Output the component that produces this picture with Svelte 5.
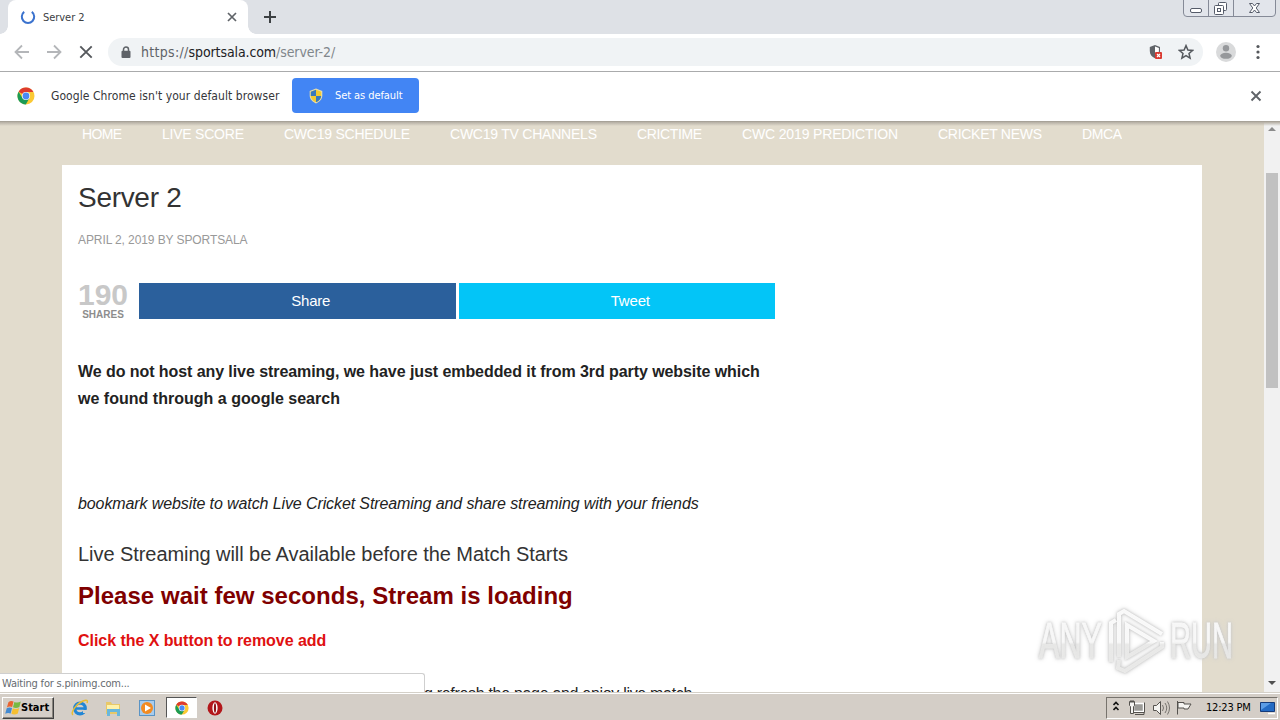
<script>
	const menu = [
		{ label: 'HOME', width: 40 },
		{ label: 'LIVE SCORE', width: 82 },
		{ label: 'CWC19 SCHEDULE', width: 126 },
		{ label: 'CWC19 TV CHANNELS', width: 147 },
		{ label: 'CRICTIME', width: 65 },
		{ label: 'CWC 2019 PREDICTION', width: 156 },
		{ label: 'CRICKET NEWS', width: 104 },
		{ label: 'DMCA', width: 40 }
	];
</script>

{#snippet chromeLogo(size)}
	<svg width={size} height={size} viewBox="0 0 18 18">
		<circle cx="9" cy="9" r="8.5" fill="#fbc934" />
		<path d="M9 9 1.6 4.7A8.5 8.5 0 0 1 16.4 5H9z" fill="#dd3b2e" />
		<path d="M1.6 4.7A8.5 8.5 0 0 0 8.8 17.5L12.5 11 9 9 5.5 11z" fill="#1b9b55" />
		<circle cx="9" cy="9" r="4.1" fill="#fff" />
		<circle cx="9" cy="9" r="3.4" fill="#4a8af4" />
	</svg>
{/snippet}

<div class="screen">
	<div class="tabs">
		<div class="tab">
			<svg class="spinner" width="16" height="16" viewBox="0 0 16 16">
				<path d="M4.2 2.9A6.2 6.2 0 1 0 11.8 2.9" fill="none" stroke="#3b72ce" stroke-width="2" />
			</svg>
			<span class="tab-title">Server 2</span>
			<svg width="10" height="10" viewBox="0 0 10 10">
				<path d="M1 1l8 8M9 1L1 9" stroke="#5f6368" stroke-width="1.7" />
			</svg>
		</div>
		<svg class="plus" width="12" height="12" viewBox="0 0 12 12">
			<path d="M6 0v12M0 6h12" stroke="#3c4043" stroke-width="2" />
		</svg>
		<svg class="controls" width="94" height="18" viewBox="0 0 94 18">
			<path d="M.5 0v13q0 3.5 3.5 3.5h85q3.5 0 3.5-3.5V0M25.5 0v16M50.5 0v16" fill="#e2e5eb" stroke="#858a97" />
			<rect x="7.5" y="8.5" width="11" height="4" rx="1.5" fill="#fff" stroke="#555b69" />
			<rect x="35.5" y="2.5" width="8" height="8" rx="1" fill="#fff" stroke="#555b69" />
			<rect x="31.5" y="5.5" width="9" height="9" rx="1" fill="#fff" stroke="#555b69" />
			<rect x="34.5" y="8.5" width="3" height="3" fill="none" stroke="#555b69" />
			<path d="M66.5 3.5h3l2 2.500 2-2.500h3l-3.300 4.500 3.300 4.500h-3l-2-2.500-2 2.500h-3l3.300-4.500z" fill="#fff" stroke="#555b69" />
		</svg>
	</div>

	<div class="toolbar">
		<svg width="16" height="16" viewBox="0 0 16 16">
			<path d="M15 8H2M8 1.500 1.500 8 8 14.500" fill="none" stroke="#b4b6b9" stroke-width="1.8" />
		</svg>
		<svg width="16" height="16" viewBox="0 0 16 16">
			<path d="M1 8h13M8 1.500 14.500 8 8 14.500" fill="none" stroke="#b4b6b9" stroke-width="1.8" />
		</svg>
		<svg width="16" height="16" viewBox="0 0 16 16">
			<path d="M2.300 2.300l11.400 11.400M13.700 2.300L2.300 13.700" stroke="#55585c" stroke-width="1.9" />
		</svg>
		<div class="address">
			<svg class="lock" width="10" height="13" viewBox="0 0 10 13">
				<path d="M2.500 6V3.500a2.500 2.500 0 0 1 5 0V6" fill="none" stroke="#5f6368" stroke-width="1.5" />
				<rect x="0.5" y="4.8" width="9" height="7.2" rx="1" fill="#5f6368" />
			</svg>
			<span class="url"><i>https://</i>sportsala.com<em>/server-2/</em></span>
			<svg class="shield" width="16" height="18" viewBox="0 0 16 18">
				<path d="M7 2 1.800 4v4c0 3.500 2 6 5.200 7.300 3.200-1.300 5-3.800 5-7.300V4z" fill="#5f6368" />
				<path d="M7 3.500v10.300c2.400-1.200 3.900-3.100 3.900-5.800V5z" fill="#fff" />
				<rect x="7" y="9" width="7" height="7" rx="1" fill="#d93a31" />
				<path d="M9 11l3 3M12 11l-3 3" stroke="#fff" stroke-width="1.2" />
			</svg>
			<svg width="16" height="16" viewBox="0 0 16 16">
				<path d="M8 1.600 9.900 6l4.700.4-3.600 3.100 1.100 4.700L8 11.700l-4.100 2.500L5 9.500 1.400 6.400 6.100 6z" fill="none" stroke="#55595e" stroke-width="1.5" />
			</svg>
		</div>
		<svg class="avatar" width="20" height="20" viewBox="0 0 20 20">
			<circle cx="10" cy="10" r="10" fill="#d9dadb" />
			<circle cx="10" cy="6.3" r="3.2" fill="#96989b" />
			<ellipse cx="10" cy="13.8" rx="5.8" ry="3" fill="#96989b" />
		</svg>
		<svg class="dots" width="4" height="16" viewBox="0 0 4 16" fill="#55585c">
			<circle cx="2" cy="2.5" r="1.6" />
			<circle cx="2" cy="8" r="1.6" />
			<circle cx="2" cy="13.5" r="1.6" />
		</svg>
	</div>

	<div class="infobar">
		{@render chromeLogo(18)}
		<span class="notice">Google Chrome isn't your default browser</span>
		<button>
			<svg width="14" height="16" viewBox="0 0 14 16">
				<path d="M7 .5 13.300 3v4.500C13.300 11 10.500 14 7 15.500 3.500 14 .7 11 .7 7.500V3z" fill="#e8dfad" />
				<path d="M7 1.800V8H1.800V3.700zM7 8h5.200C12 11 10 13 7 14.300z" fill="#f3ca31" />
				<path d="M7 1.800V8H1.800V3.700zM7 8h5.200C12 11 10 13 7 14.300z" fill="#3979bd" />
				<path d="M7 1.800V8h5.200V3.700zM7 8H1.800C2 11 4 13 7 14.300z" fill="#f3ca31" />
			</svg>
			<span>Set as default</span>
		</button>
		<svg class="dismiss" width="12" height="12" viewBox="0 0 12 12">
			<path d="M1.500 1.500l9 9M10.500 1.500l-9 9" stroke="#5f6368" stroke-width="1.9" />
		</svg>
	</div>

	<div class="viewport">
		<div class="page">
			<nav>
				{#each menu as item}
					<svg width={item.width} height="18">
						<text x="0" y="14" textLength={item.width}>{item.label}</text>
					</svg>
				{/each}
			</nav>
			<main>
				<h1>Server 2</h1>
				<p class="meta">APRIL 2, 2019 BY SPORTSALA</p>
				<div class="share">
					<div class="count"><b>190</b><span>SHARES</span></div>
					<a class="facebook">Share</a>
					<a class="twitter">Tweet</a>
				</div>
				<p class="disclaimer"><span>We do not host any live streaming, we have just embedded it from 3rd party website which</span><br />we found through a google search</p>
				<p class="bookmark">bookmark website to watch Live Cricket Streaming and share streaming with your friends</p>
				<h3>Live Streaming will be Available before the Match Starts</h3>
				<h2>Please wait few seconds, Stream is loading</h2>
				<p class="remove">Click the X button to remove add</p>
				<p class="refresh">g refresh the page and enjoy live match</p>
			</main>
		</div>
		<div class="scrollbar">
			<svg width="8" height="4" viewBox="0 0 8 4"><path d="M0 4 4 0l4 4z" fill="#8b8b8b" /></svg>
			<div class="thumb"></div>
			<svg class="down" width="8" height="4" viewBox="0 0 8 4"><path d="M0 0l4 4 4-4z" fill="#505050" /></svg>
		</div>
		<div class="status">Waiting for s.pinimg.com...</div>
		<svg class="watermark" width="206" height="70" viewBox="0 0 206 70">
			<defs>
				<linearGradient id="fade" x1="0" y1="0" x2="0" y2="1">
					<stop offset=".52" stop-color="#fff" />
					<stop offset=".56" stop-color="#ededec" />
				</linearGradient>
			</defs>
			<g fill="url(#fade)" stroke="url(#fade)" stroke-width=".8" opacity=".85">
				<text x="5" y="50" textLength="63" lengthAdjust="spacingAndGlyphs">ANY</text>
				<text x="136" y="50" textLength="63" lengthAdjust="spacingAndGlyphs">RUN</text>
			</g>
			<g fill="none" stroke="url(#fade)" stroke-width="4" opacity=".9">
				<path d="M77 54V15l5-3M85 49V6l5-3 38 23M93 17v32l27-16zM85 52l-1 8 7 3 37-24v-5" />
			</g>
		</svg>
	</div>

	<footer>
		<div class="start">
			<svg width="16" height="16" viewBox="0 0 15 15">
				<path d="M3.200 2Q5.500.300 8 1.500L6.700 6.600Q4.200 5.400 1.800 7z" fill="#e96431" />
				<path d="M8.800 1.900q3 1.300 6-.5L13.500 6.600q-3 1.700-6 .3z" fill="#78b943" />
				<path d="M1.600 7.800q2.500-1.600 5-.3l-1.300 5.200Q2.800 11.500.2 13z" fill="#438ad2" />
				<path d="M7.300 7.800q3 1.400 6-.3L12 12.700q-3 1.700-6 .3z" fill="#f5bf32" />
			</svg>
			<b>Start</b>
		</div>
		<div class="launch">
			<svg width="18" height="18" viewBox="0 0 18 18">
				<circle cx="9" cy="9.5" r="5.3" fill="none" stroke="#2186d5" stroke-width="3.2" />
				<path d="M5 9.500h10" stroke="#2186d5" stroke-width="2.5" />
				<path d="M12 11h6v3h-6z" fill="#d5cfc7" />
				<path d="M2 16C-1 14 5 5 12 2c4-1.700 5-.5 4 2" fill="none" stroke="#e8bd33" stroke-width="1.5" />
			</svg>
			<svg class="folder" width="18" height="18" viewBox="0 0 18 18">
				<path d="M2 3h5l1 2h8v10H2z" fill="#e8c868" />
				<path d="M3 6h12v5H3z" fill="#fff2aa" />
				<path d="M3 10h13v7h-3v-4H6v4H3z" fill="#69b7dc" />
			</svg>
			<svg width="18" height="18" viewBox="0 0 18 18">
				<rect x="1.5" y="1.5" width="15" height="15" fill="#a8cced" stroke="#5a94c5" />
				<circle cx="9" cy="9" r="6" fill="#f28b22" />
				<path d="M7 5.500v7L13 9z" fill="#fff" />
			</svg>
			<div class="active">{@render chromeLogo(14)}</div>
			<svg width="16" height="16" viewBox="0 0 16 16">
				<circle cx="8" cy="8" r="7.5" fill="#b3171b" />
				<ellipse cx="8" cy="8" rx="2.6" ry="5.7" fill="#fff" />
				<ellipse cx="8" cy="8" rx="1.1" ry="4.8" fill="#8f1216" />
			</svg>
		</div>
		<div class="tray">
			<svg width="14" height="18" viewBox="0 0 14 18">
				<path d="M.5 6 3 3.500 5.500 6M.5 11 3 8.500 5.500 11" fill="none" stroke="#111" stroke-width="1.6" />
			</svg>
			<svg class="devices" width="66" height="18" viewBox="0 0 66 18">
				<g fill="#f5f4f1" stroke="#55524e">
					<rect x="5.5" y="4.5" width="10" height="8" fill="#9c9b97" stroke="#fff" stroke-width="1.5" />
					<path d="M16.500 3.500v10H4.500v-3M7 15.500h9v-2" fill="none" />
					<path d="M1.500 2.500h5v4l-1 1v7h-3v-7l-1-1zM3 1v3M5 1v3" />
					<path d="M25.500 6.500h3l4-4v13l-4-4h-3z" />
					<path d="M34.500 6q2 3 0 6M37 4q3.500 5 0 10M39.500 2.500q4 6.500 0 13" fill="none" stroke="#77736e" />
					<path d="M49.500 2v13.500M50 3.500h6v1.500h7l-3 5h-4V9h-6z" />
				</g>
			</svg>
			<span>12:23 PM</span>
			<svg class="desktop" width="16" height="14" viewBox="0 0 16 14">
				<path d="M.5 1.500h14v9H.5z" fill="#246bc4" stroke="#153b7a" />
				<path d="M1 9V2h10z" fill="#5b9ce5" />
				<path d="M8 12.500h7" stroke="#fff" stroke-width="1.5" />
			</svg>
		</div>
	</footer>
</div>

<style>
	:global(body) {
		overflow: hidden;
	}

	.screen {
		width: 1280px;
		height: 720px;
		display: flex;
		flex-direction: column;
		overflow: hidden;
		background: #fff;
		font-family: 'DejaVu Sans Condensed', 'DejaVu Sans', sans-serif;
		font-stretch: condensed;
	}

	svg {
		display: block;
		flex-shrink: 0;
	}

	.tabs {
		height: 34px;
		flex-shrink: 0;
		display: flex;
		align-items: center;
		padding-left: 8px;
		box-sizing: border-box;
		background: #dee1e6;
	}

	.tab {
		position: relative;
		width: 240px;
		height: 34px;
		display: flex;
		align-items: center;
		padding: 0 11px 0 12px;
		box-sizing: border-box;
		background: #fff;
		border-radius: 8px 8px 0 0;
	}

	.tab::before,
	.tab::after {
		content: '';
		position: absolute;
		bottom: 0;
		left: -8px;
		width: 8px;
		height: 8px;
		background: radial-gradient(circle at 0 0, transparent 7.5px, #fff 8px);
	}

	.tab::after {
		left: 240px;
		background: radial-gradient(circle at 100% 0, transparent 7.5px, #fff 8px);
	}

	.tab-title {
		flex: 1;
		margin-left: 7px;
		font-size: 11px;
		letter-spacing: -0.05px;
		color: #3c4043;
	}

	.plus {
		margin-left: 16px;
	}

	.controls {
		margin: 0 3px 0 auto;
		align-self: flex-start;
	}

	.toolbar {
		height: 38px;
		flex-shrink: 0;
		display: flex;
		align-items: center;
		gap: 16px;
		padding: 0 20px 1px 14px;
		box-sizing: border-box;
		border-bottom: 1px solid #aaabac;
	}

	.address {
		flex: 1;
		height: 28px;
		display: flex;
		align-items: center;
		margin-left: -2px;
		padding: 0 9px 0 13px;
		border-radius: 14px;
		background: #f0f3f5;
	}

	.url {
		flex: 1;
		margin-left: 10px;
		font-size: 14px;
		letter-spacing: -0.1px;
		color: #202124;
	}

	.url i,
	.url em {
		font-style: normal;
		color: #5f6368;
	}

	.url i {
		letter-spacing: 0.3px;
	}

	.url em {
		color: #80868b;
	}

	.shield {
		margin-right: 14px;
	}

	.avatar {
		margin-left: -3px;
		margin-right: 4px;
	}

	.infobar {
		height: 49px;
		flex-shrink: 0;
		display: flex;
		align-items: center;
		padding: 0 18px 2px 17px;
		box-sizing: border-box;
	}

	.notice {
		width: 228px;
		margin: 0 13px 0 16px;
		font-size: 12px;
		letter-spacing: 0.07px;
		white-space: nowrap;
		color: #35363a;
	}

	button {
		width: 127px;
		height: 35px;
		display: flex;
		align-items: center;
		padding: 0 0 0 17px;
		border: 0;
		border-radius: 4px;
		background: #4285f4;
		color: #fff;
		font: 11px 'DejaVu Sans Condensed', sans-serif;
		white-space: nowrap;
	}

	button span {
		margin-left: 12px;
		letter-spacing: -0.08px;
	}

	.dismiss {
		margin-left: auto;
	}

	.viewport {
		position: relative;
		height: 571px;
		flex-shrink: 0;
		display: flex;
		overflow: hidden;
		font-family: 'Liberation Sans', Arial, sans-serif;
	}

	/* shadow cast by the infobar */
	.viewport::before {
		content: '';
		position: absolute;
		z-index: 2;
		top: -1px;
		width: 1280px;
		height: 6px;
		background: linear-gradient(#85817b, #b5afa4 35%, transparent);
	}

	.page {
		width: 1264px;
		height: 571px;
		overflow: hidden;
		background: #e2dccd;
	}

	nav {
		height: 44px;
		display: flex;
		gap: 40px;
		padding: 4px 0 0 82px;
		box-sizing: border-box;
	}

	nav text {
		font-size: 14px;
		fill: #fff;
	}

	main {
		width: 1140px;
		height: 560px;
		margin-left: 62px;
		padding: 17px 16px;
		box-sizing: border-box;
		background: #fff;
		color: #222;
	}

	h1,
	h2,
	h3,
	p {
		margin: 0;
		font-weight: 400;
		white-space: nowrap;
	}

	h1 {
		font-size: 28px;
		letter-spacing: -0.3px;
		line-height: 32px;
		color: #333;
	}

	.meta {
		margin-top: 16px;
		font-size: 12px;
		letter-spacing: -0.09px;
		line-height: 20px;
		color: #999;
	}

	.share {
		width: 697px;
		height: 36px;
		display: flex;
		gap: 3px;
		margin-top: 33px;
	}

	.share a {
		flex: 1;
		font-size: 15px;
		letter-spacing: -0.2px;
		line-height: 36px;
		text-align: center;
		text-indent: 27px;
		color: #fff;
	}

	.facebook {
		background: #2b609c;
	}

	.twitter {
		background: #03c5f7;
	}

	.count {
		width: 50px;
		margin-right: 8px;
		display: flex;
		flex-direction: column;
		align-items: center;
		font-weight: 700;
		color: #8d8d8d;
	}

	.count b {
		font-size: 30px;
		line-height: 24px;
		color: #c8c8c8;
	}

	.count span {
		font-size: 10px;
		line-height: 15px;
	}

	.disclaimer {
		margin-top: 39px;
		font-size: 16px;
		font-weight: 700;
		letter-spacing: 0.02px;
		line-height: 27px;
	}

	.disclaimer span {
		letter-spacing: -0.07px;
	}

	.bookmark {
		margin-top: 78px;
		font-size: 16px;
		font-style: italic;
		letter-spacing: -0.105px;
		line-height: 27px;
	}

	h3 {
		margin-top: 25px;
		font-size: 20px;
		letter-spacing: -0.06px;
		line-height: 24px;
		color: #333;
	}

	h2 {
		margin-top: 15px;
		font-size: 24px;
		font-weight: 700;
		letter-spacing: 0.03px;
		line-height: 30px;
		color: #800000;
	}

	.remove {
		margin-top: 16px;
		font-size: 16px;
		font-weight: 700;
		letter-spacing: -0.05px;
		line-height: 27px;
		color: #e01010;
	}

	.refresh {
		margin: 26px 0 0 346px;
		font-size: 16px;
		letter-spacing: -0.31px;
		line-height: 27px;
	}

	.scrollbar {
		width: 16px;
		display: flex;
		flex-direction: column;
		align-items: center;
		padding: 6px 0 7px;
		box-sizing: border-box;
		background: #f1f1f1;
	}

	.thumb {
		width: 12px;
		height: 215px;
		margin-top: 42px;
		background: #c1c1c1;
	}

	.down {
		margin-top: auto;
	}

	.status {
		position: absolute;
		left: 0;
		bottom: 0;
		width: 425px;
		height: 19px;
		padding-left: 2px;
		box-sizing: border-box;
		border: solid #cfcfcf;
		border-width: 1px 1px 0 0;
		border-top-right-radius: 3px;
		background: #fff;
		font: 11px/19px 'DejaVu Sans Condensed', sans-serif;
		letter-spacing: -0.2px;
		color: #666b70;
	}

	.watermark {
		position: absolute;
		left: 1034px;
		top: 487px;
		overflow: visible;
		filter: drop-shadow(0 0 1px #c2c2c2) drop-shadow(0 0 2px #d2d2d2);
	}

	.watermark text {
		font: 50px 'Liberation Sans Narrow', 'Liberation Sans', sans-serif;
	}

	footer {
		height: 28px;
		flex-shrink: 0;
		display: flex;
		align-items: center;
		padding: 2px 2px 0;
		box-sizing: border-box;
		border-top: 1px solid #d4d0c8;
		background: #d4cec7;
		box-shadow: inset 0 1px #fff;
	}

	.start {
		width: 52px;
		height: 22px;
		display: flex;
		align-items: center;
		padding-left: 2px;
		box-sizing: border-box;
		border: 1px solid;
		border-color: #fff #404040 #404040 #fff;
		box-shadow: inset -1px -1px #89857e;
		font-size: 11px;
	}

	.launch {
		display: flex;
		align-items: center;
		gap: 16px;
		margin-left: 17px;
	}

	.folder {
		margin-left: -1px;
	}

	.active {
		width: 31px;
		height: 21px;
		display: flex;
		align-items: center;
		justify-content: center;
		margin: 0 -6px;
		box-sizing: border-box;
		border: 1px solid;
		border-color: #555 #fff #fff #555;
		background: #fff;
	}

	.tray {
		width: 172px;
		height: 22px;
		display: flex;
		align-items: center;
		margin-left: auto;
		padding-left: 6px;
		box-sizing: border-box;
		border: 1px solid;
		border-color: #77736d #fff #fff #77736d;
	}

	.devices {
		margin-left: 1px;
	}

	.tray span {
		margin-left: 12px;
		font-size: 11px;
		white-space: nowrap;
		letter-spacing: -0.2px;
	}

	.desktop {
		margin-left: 9px;
	}
</style>
